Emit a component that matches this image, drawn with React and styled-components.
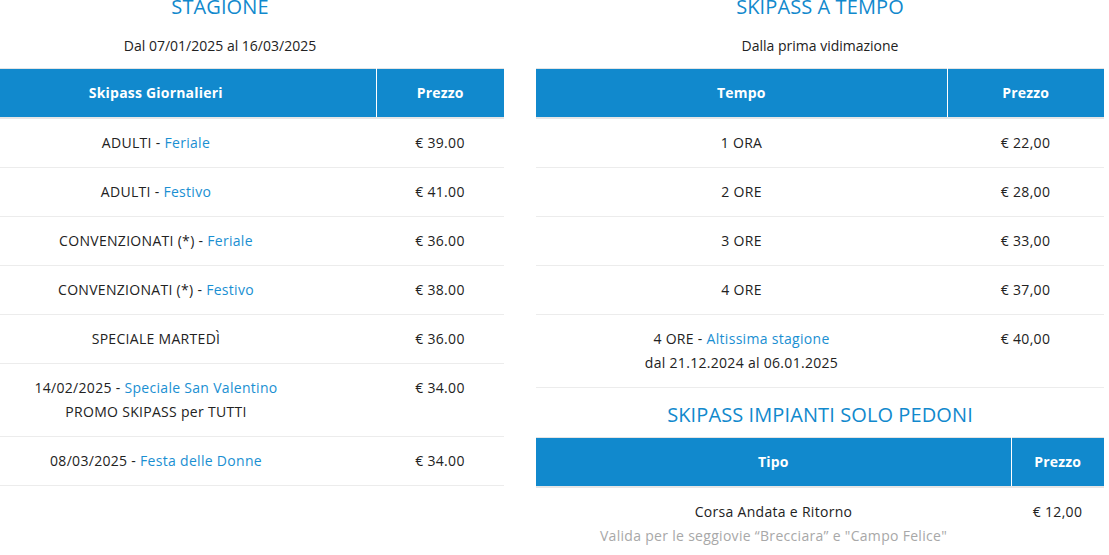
import React from "react";
import styled, { createGlobalStyle } from "styled-components";

const Global = createGlobalStyle`
  html, body { margin: 0; padding: 0; background: #fff; overflow: hidden; }
  body { font-family: "Open Sans", "Liberation Sans", sans-serif; color: #222; }
  *, *::before, *::after { box-sizing: border-box; }
`;

const Page = styled.div`
  display: flex;
  gap: 32px;
  margin-left: -64px;
  margin-top: -5px;
  width: 1168px;
`;

const Column = styled.section`
  width: 568px;
  flex: none;
  display: flex;
  flex-direction: column;
`;

const Title = styled.h3`
  margin: ${(p) => (p.$spaced ? "15px 0 10px" : "0")};
  font-size: 20px;
  line-height: 24px;
  font-weight: 400;
  text-align: center;
  color: #1189cd;
  text-transform: uppercase;
  letter-spacing: 0.1px;
`;

const Subtitle = styled.p`
  margin: 15px 0 10px;
  font-size: 14px;
  line-height: 24px;
  text-align: center;
  color: #222;
`;

const Table = styled.table`
  width: 100%;
  border-collapse: collapse;
  table-layout: fixed;
  border-top: 1px solid #e4e4e4;
  font-size: 14px;
`;

const HeadCell = styled.th`
  background: #1189cd;
  color: #fff;
  font-weight: 700;
  line-height: 24px;
  padding: 12px 8px;
  text-align: center;
  letter-spacing: 0.2px;
  width: ${(p) => (p.$w ? `${p.$w}px` : "auto")};
  border-left: ${(p) => (p.$divider ? "1px solid #fff" : "none")};
`;

const HeadRow = styled.tr`
  border-bottom: 2px solid #e6e6e6;
`;

const Row = styled.tr`
  border-bottom: ${(p) => (p.$last ? "none" : "1px solid #ececec")};
`;

const Cell = styled.td`
  padding: 12px 8px;
  line-height: 24px;
  text-align: center;
  vertical-align: top;
  color: #222;
  letter-spacing: 0.3px;
`;

const Accent = styled.span`
  color: #1a8fd2;
`;

const Note = styled.span`
  display: block;
  color: #a8a8a8;
  white-space: nowrap;
`;

const giornalieri = [
  ["ADULTI", "Feriale", null, "€ 39.00"],
  ["ADULTI", "Festivo", null, "€ 41.00"],
  ["CONVENZIONATI (*)", "Feriale", null, "€ 36.00"],
  ["CONVENZIONATI (*)", "Festivo", null, "€ 38.00"],
  ["SPECIALE MARTEDÌ", null, null, "€ 36.00"],
  ["14/02/2025", "Speciale San Valentino", "PROMO SKIPASS per TUTTI", "€ 34.00"],
  ["08/03/2025", "Festa delle Donne", null, "€ 34.00"],
];

const tempo = [
  ["1 ORA", null, null, "€ 22,00"],
  ["2 ORE", null, null, "€ 28,00"],
  ["3 ORE", null, null, "€ 33,00"],
  ["4 ORE", null, null, "€ 37,00"],
  ["4 ORE", "Altissima stagione", "dal 21.12.2024 al 06.01.2025", "€ 40,00"],
];

const Label = ({ main, accent, second }) => (
  <>
    {main}
    {accent && (
      <>
        {" - "}
        <Accent>{accent}</Accent>
      </>
    )}
    {second && (
      <>
        <br />
        {second}
      </>
    )}
  </>
);

const PriceTable = ({ head, priceWidth, rows }) => (
  <Table>
    <thead>
      <HeadRow>
        <HeadCell>{head}</HeadCell>
        <HeadCell $w={priceWidth} $divider>
          Prezzo
        </HeadCell>
      </HeadRow>
    </thead>
    <tbody>
      {rows.map(([main, accent, second, price], i) => (
        <Row key={i}>
          <Cell>
            <Label main={main} accent={accent} second={second} />
          </Cell>
          <Cell>{price}</Cell>
        </Row>
      ))}
    </tbody>
  </Table>
);

export default function App() {
  return (
    <>
      <Global />
      <Page>
        <Column>
          <Title>Stagione</Title>
          <Subtitle>Dal 07/01/2025 al 16/03/2025</Subtitle>
          <PriceTable head="Skipass Giornalieri" priceWidth={128} rows={giornalieri} />
        </Column>
        <Column>
          <Title>Skipass a tempo</Title>
          <Subtitle>Dalla prima vidimazione</Subtitle>
          <PriceTable head="Tempo" priceWidth={157} rows={tempo} />
          <Title $spaced>Skipass impianti solo pedoni</Title>
          <Table>
            <thead>
              <HeadRow>
                <HeadCell>Tipo</HeadCell>
                <HeadCell $w={93} $divider>
                  Prezzo
                </HeadCell>
              </HeadRow>
            </thead>
            <tbody>
              <Row $last>
                <Cell>
                  Corsa Andata e Ritorno
                  <Note>Valida per le seggiovie “Brecciara” e "Campo Felice"</Note>
                </Cell>
                <Cell>€ 12,00</Cell>
              </Row>
            </tbody>
          </Table>
        </Column>
      </Page>
    </>
  );
}
